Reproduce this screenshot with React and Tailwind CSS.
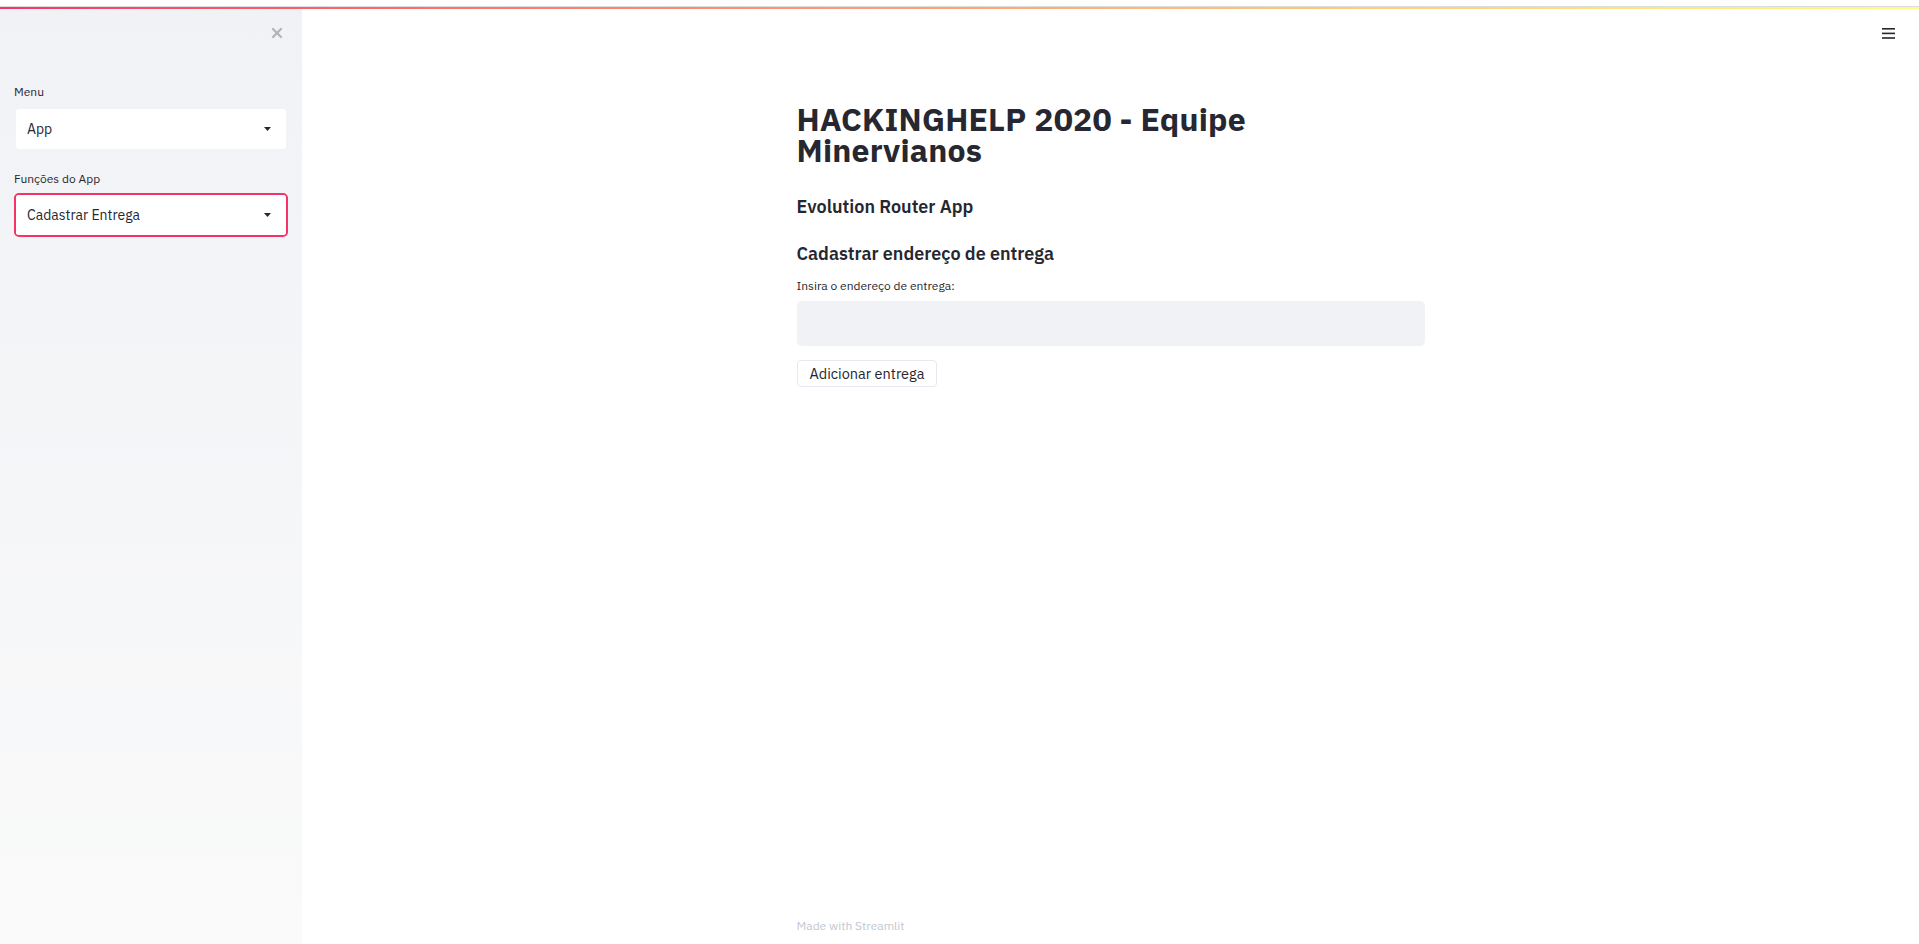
import { X } from 'lucide-react'

const ink = 'text-[#262730]'

function Select({ value, focused }) {
  return (
    <div
      className={`rounded-[5px] border-2 ${focused ? 'border-[#f63366]' : 'border-transparent'}`}
    >
      <div className="h-[40px] bg-white rounded-[3px] flex items-center justify-between pl-[11px] pr-[15px]">
        <span className={`text-[14px] ${ink}`}>{value}</span>
        <svg width="7" height="4" viewBox="0 0 7 4" className="fill-[#262730]">
          <path d="M0 0h7L3.5 4z" />
        </svg>
      </div>
    </div>
  )
}

export default function App() {
  return (
    <div
      className="h-screen flex flex-col bg-white overflow-hidden"
      style={{ fontFamily: '"IBM Plex Sans", Roboto, "Noto Sans", sans-serif' }}
    >
      {/* browser strip + decoration */}
      <div className="h-[6px] bg-white" />
      <div className="h-px bg-[#dcdcdc]" />
      <div className="h-[2px] bg-linear-to-r from-[#f63366] to-[#fffd80]" />

      <div className="flex-1 flex min-h-0">
        {/* SIDEBAR */}
        <aside className="w-[302px] shrink-0 bg-linear-to-b from-[#f0f2f6] to-[#fafafa]">
          <div className="h-[48px] flex items-center justify-end pr-[17px]">
            <X size={16} strokeWidth={3.5} className="text-[#b4b4b8]" />
          </div>
          <div className="pt-[27px] px-[14px] w-[302px]">
            <div className={`text-[12px] leading-4 ${ink} mb-[7px]`}>Menu</div>
            <div className="w-[274px]">
              <Select value="App" />
            </div>
            <div className={`text-[12px] leading-4 ${ink} mt-[20px] mb-[6px]`}>Funções do App</div>
            <div className="w-[274px]">
              <Select value="Cadastrar Entrega" focused />
            </div>
          </div>
        </aside>

        {/* MAIN */}
        <main className="flex-1 relative flex flex-col">
          <button className="absolute top-[19px] right-[24px]">
            <svg width="13" height="11" viewBox="0 0 13 11" className="fill-[#262730]">
              <rect x="0" y="0" width="13" height="1.6" />
              <rect x="0" y="4.6" width="13" height="1.6" />
              <rect x="0" y="9.2" width="13" height="1.6" />
            </svg>
          </button>

          <div className="w-[628px] mx-auto pt-[95px]">
            <h1 className={`text-[32px] leading-[31px] tracking-[0.2px] font-bold ${ink}`}>
              HACKINGHELP 2020 - Equipe Minervianos
            </h1>
            <h3 className={`mt-[27px] text-[18px] leading-[27px] font-semibold ${ink}`}>
              Evolution Router App
            </h3>
            <h3 className={`mt-[20px] text-[18px] leading-[27px] font-semibold ${ink}`}>
              Cadastrar endereço de entrega
            </h3>
            <label className={`block mt-[11px] text-[12px] leading-4 ${ink}`}>
              Insira o endereço de entrega:
            </label>
            <input
              type="text"
              className="mt-[7px] w-full h-[45px] rounded-[5px] bg-[#f0f2f6] px-3 text-[14px] outline-none"
            />
            <button
              className={`mt-[14px] h-[27px] px-[12px] rounded-[4px] border border-[#e6e9ef] bg-white text-[14.5px] ${ink}`}
            >
              Adicionar entrega
            </button>
          </div>

          <footer className="mt-auto w-[628px] mx-auto pb-[8px]">
            <span className="text-[12px] leading-4 text-[#c4c6d2]">Made with Streamlit</span>
          </footer>
        </main>
      </div>
    </div>
  )
}
